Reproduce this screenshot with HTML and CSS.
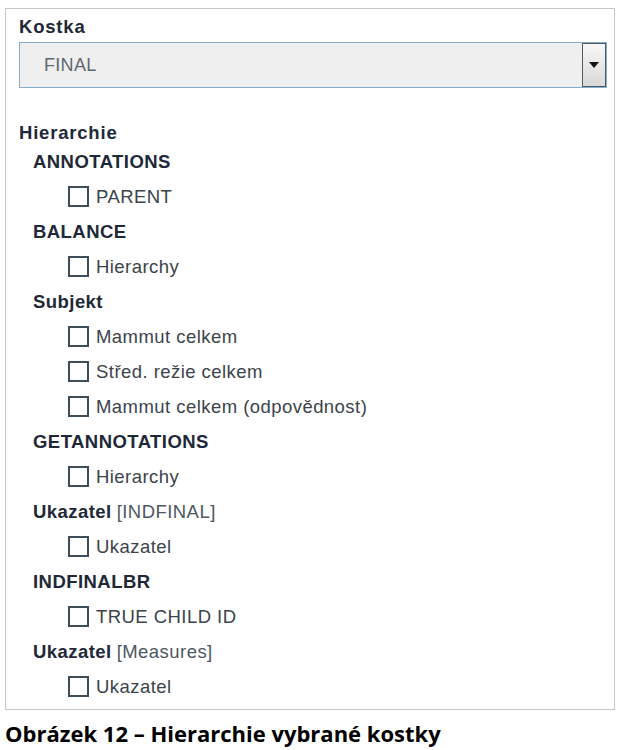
FILE: index.html
```html
<!DOCTYPE html>
<html lang="cs">
<head>
<meta charset="utf-8">
<title>Hierarchie vybrané kostky</title>
<link rel="stylesheet" href="styles.css">
</head>
<body>
<div class="panel">
  <div class="field-label">Kostka</div>
  <div class="select">
    <span class="select-value">FINAL</span>
    <span class="select-btn"><span class="arrow"></span></span>
  </div>
  <div class="section-label">Hierarchie</div>
  <ul class="tree">
    <li class="group">ANNOTATIONS</li>
    <li class="item"><span class="cb"></span>PARENT</li>
    <li class="group">BALANCE</li>
    <li class="item"><span class="cb"></span>Hierarchy</li>
    <li class="group">Subjekt</li>
    <li class="item"><span class="cb"></span>Mammut celkem</li>
    <li class="item"><span class="cb"></span>Střed. režie celkem</li>
    <li class="item"><span class="cb"></span>Mammut celkem (odpovědnost)</li>
    <li class="group">GETANNOTATIONS</li>
    <li class="item"><span class="cb"></span>Hierarchy</li>
    <li class="group">Ukazatel <span class="dim">[INDFINAL]</span></li>
    <li class="item"><span class="cb"></span>Ukazatel</li>
    <li class="group">INDFINALBR</li>
    <li class="item"><span class="cb"></span>TRUE CHILD ID</li>
    <li class="group">Ukazatel <span class="dim">[Measures]</span></li>
    <li class="item"><span class="cb"></span>Ukazatel</li>
  </ul>
</div>
<div class="caption">Obrázek 12 – Hierarchie vybrané kostky</div>
</body>
</html>
```
FILE: styles.css
```css
html, body {
  margin: 0;
  padding: 0;
  background: #ffffff;
}
body {
  font-family: "Liberation Sans", Arial, sans-serif;
  width: 624px;
  height: 750px;
  overflow: hidden;
}
.panel {
  margin: 8px 9px 0 5px;
  border: 1px solid #c6c6c6;
  padding: 7px 7px 5px 13px;
}
.field-label, .section-label {
  font-weight: bold;
  font-size: 18.5px;
  line-height: 22px;
  color: #1e2838;
  letter-spacing: 0.8px;
}
.select {
  margin-top: 4px;
  height: 44px;
  border: 1px solid #86aecb;
  background: #efefef;
  display: flex;
  align-items: stretch;
  justify-content: space-between;
}
.select-value {
  padding-left: 24px;
  align-self: center;
  font-size: 18px;
  color: #5d6870;
  letter-spacing: 0.3px;
}
.select-btn {
  width: 22px;
  border: 1px solid #4c5a66;
  background: linear-gradient(#f7f7f7, #d9d9d9);
  display: flex;
  align-items: center;
  justify-content: center;
}
.arrow {
  width: 0;
  height: 0;
  border-left: 5px solid transparent;
  border-right: 5px solid transparent;
  border-top: 6px solid #111;
}
.section-label {
  margin-top: 34px;
}
.tree {
  list-style: none;
  margin: 0;
  padding: 0;
}
.tree li {
  height: 35px;
  display: flex;
  align-items: center;
  font-size: 18.5px;
  letter-spacing: 0.45px;
}
.group {
  padding-left: 14px;
  font-weight: bold;
  color: #1e2838;
}
.group .dim {
  font-weight: normal;
  color: #4d5761;
  margin-left: 5px;
}
.item {
  padding-left: 49px;
  color: #3b434b;
}
.cb {
  width: 17px;
  height: 17px;
  border: 2px solid #3d4e5a;
  margin-right: 7px;
  flex: none;
}
.caption {
  margin: 9px 0 0 5px;
  font-family: "Open Sans", "Liberation Sans", sans-serif;
  font-weight: bold;
  font-size: 22px;
  line-height: 28px;
  color: #000;
}
```
